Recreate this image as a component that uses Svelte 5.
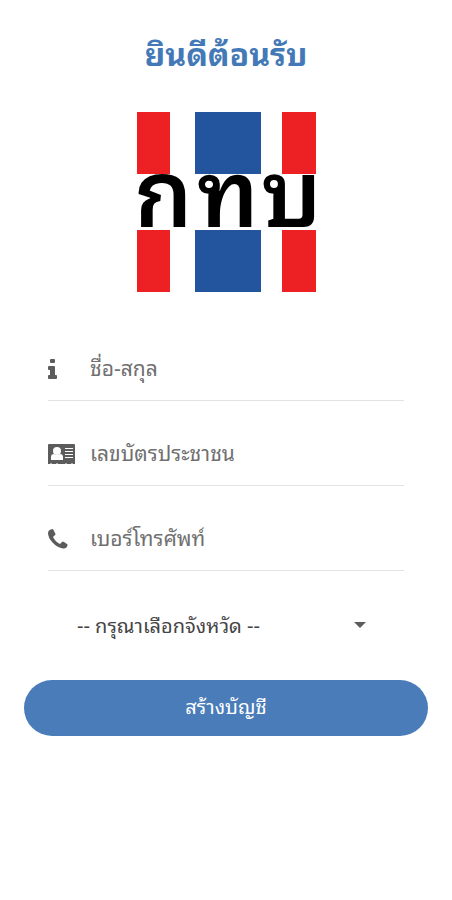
<script lang="ts">
  let name = $state('');
  let citizenId = $state('');
  let phone = $state('');
  let province = $state('');

  const provinces = ['กรุงเทพมหานคร', 'เชียงใหม่', 'ขอนแก่น', 'ชลบุรี', 'สงขลา'];

  function onSubmit(e: SubmitEvent) {
    e.preventDefault();
  }
</script>

<main>
  <h1>ยินดีต้อนรับ</h1>

  <svg class="logo" viewBox="0 0 180 180" role="img" aria-label="กทบ">
    <g fill="#ed2024">
      <rect x="1" y="0" width="33" height="62" />
      <rect x="146" y="0" width="34" height="62" />
      <rect x="1" y="118" width="33" height="62" />
      <rect x="146" y="118" width="34" height="62" />
    </g>
    <g fill="#23559f">
      <rect x="59" y="0" width="66" height="62" />
      <rect x="59" y="118" width="66" height="62" />
    </g>
    <text y="115"><tspan x="-2">ก</tspan><tspan x="61">ท</tspan><tspan x="125">บ</tspan></text>
  </svg>

  <form onsubmit={onSubmit}>
    <div class="field">
      <label for="name" aria-label="ชื่อ-สกุล">
        <svg width="10" height="20" viewBox="0 0 10 20">
          <path d="M3 0h3q1 0 1 1v2q0 1-1 1H3Q2 4 2 3V1q0-1 1-1zM1 7h5q1 0 1 1v8h1q1 0 1 1v2q0 1-1 1H1q-1 0-1-1v-2q0-1 1-1h1v-5H1q-1 0-1-1V8q0-1 1-1z" />
        </svg>
      </label>
      <input id="name" type="text" placeholder="ชื่อ-สกุล" bind:value={name} />
    </div>

    <div class="field">
      <label for="citizen" aria-label="เลขบัตรประชาชน">
        <svg width="27" height="20" viewBox="0 0 27 20">
          <path d="M1 0h25q1 0 1 1v19h-2l-1-1-1 1h-4l-1-1-1 1H10l-1-1-1 1H4l-1-1-1 1H0V1q0-1 1-1z" />
          <g fill="#fff">
            <circle cx="9" cy="7" r="4" />
            <path d="M3 16v-3q0-3 3-3 3 2 6 0 3 0 3 3v3z" />
            <path d="M17 4h8v1h-8zM17 7h8v1h-8zM17 10h8v1h-8zM17 13h8v1h-8z" />
          </g>
        </svg>
      </label>
      <input id="citizen" type="text" inputmode="numeric" placeholder="เลขบัตรประชาชน" bind:value={citizenId} />
    </div>

    <div class="field">
      <label for="phone" aria-label="เบอร์โทรศัพท์">
        <svg width="20" height="20" viewBox="0 0 20 20">
          <path d="M4 0Q5 0 5.500 1l2 4q0 1-1 1.500L5 8q2.500 5 7 7l2-2q1-1 2 0l3 2q1 .5 .5 1.500Q18.500 20 15 19.500 9 18.500 4.500 13.500 0 8.500 0 4 0 1 4 0z" />
        </svg>
      </label>
      <input id="phone" type="tel" placeholder="เบอร์โทรศัพท์" bind:value={phone} />
    </div>

    <div class="province">
      <select aria-label="จังหวัด" bind:value={province}>
        <option value="">-- กรุณาเลือกจังหวัด --</option>
        {#each provinces as p}
          <option value={p}>{p}</option>
        {/each}
      </select>
      <svg width="12" height="6" viewBox="0 0 12 6"><path d="M0 0h12L6 6z" /></svg>
    </div>

    <button type="submit">สร้างบัญชี</button>
  </form>
</main>

<style>
  :global(body) { background: #fff; }
  main { padding: 28px 24px; font-family: "Noto Sans Thai Looped", "Noto Looped Thai", Loma, Garuda, Waree, "Noto Sans", sans-serif; color: #555; }
  h1 { margin: 0; font-size: 32px; line-height: 48px; font-weight: 700; text-align: center; color: #4479b7; }
  .logo { display: block; width: 180px; height: 180px; margin: 36px auto 0; overflow: visible; }
  .logo text { font-size: 92px; font-weight: 600; fill: #000; }

  form { display: flex; flex-direction: column; margin-top: 46px; }
  .field { display: flex; align-items: center; height: 62px; margin: 0 24px 22px; border-bottom: 1px solid #e3e3e3; }
  .field label { flex: none; display: flex; width: 42px; }
  svg { fill: #5c5c5c; }
  input { flex: 1; min-width: 0; height: 48px; padding: 0 0 6px; border: 0; outline: 0; background: none; font: inherit; font-size: 21px; color: #444; }
  input::placeholder { color: #707070; opacity: 1; }

  .province { display: flex; align-items: center; height: 48px; margin: 8px 62px 0 53px; }
  select { flex: 1; min-width: 0; height: 48px; padding: 0 0 2px; border: 0; outline: 0; background: none; appearance: none; font: inherit; font-size: 20px; color: #444; }
  .province svg { flex: none; pointer-events: none; }

  button { height: 56px; margin-top: 31px; padding: 0 0 6px; border: 0; border-radius: 28px; background: #497cb9; color: #fff; font: inherit; font-size: 20px; cursor: pointer; }
</style>
